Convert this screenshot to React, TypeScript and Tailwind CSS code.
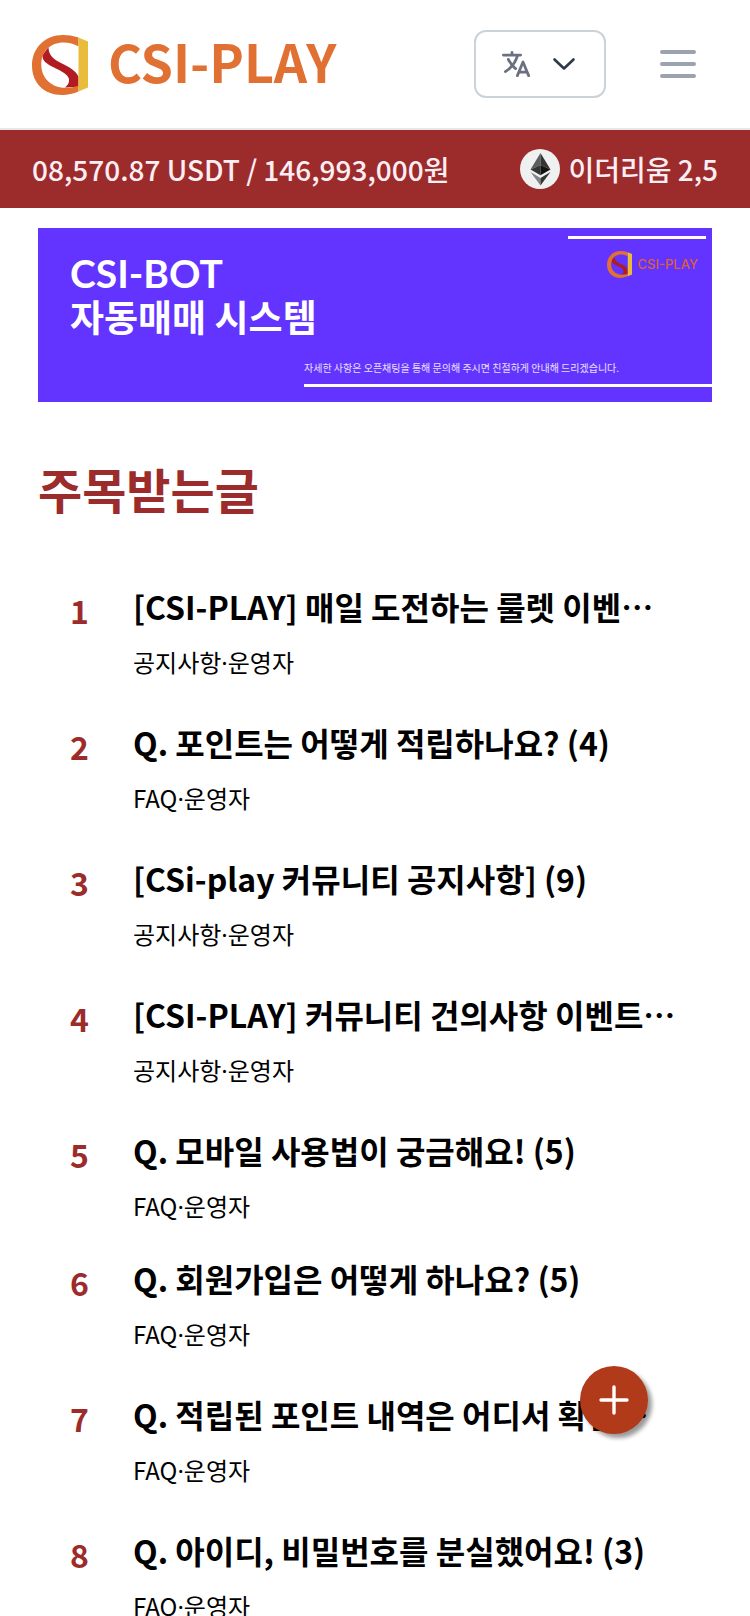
import React from 'react';
import { IoLanguage } from 'react-icons/io5';

type Post = { id: number; title: string; board: string; author: string };

const firstPosts: Post[] = [
  { id: 1, title: '[CSI-PLAY] 매일 도전하는 룰렛 이벤…', board: '공지사항', author: '운영자' },
  { id: 2, title: 'Q. 포인트는 어떻게 적립하나요? (4)', board: 'FAQ', author: '운영자' },
  { id: 3, title: '[CSi-play 커뮤니티 공지사항] (9)', board: '공지사항', author: '운영자' },
  { id: 4, title: '[CSI-PLAY] 커뮤니티 건의사항 이벤트…', board: '공지사항', author: '운영자' },
  { id: 5, title: 'Q. 모바일 사용법이 궁금해요! (5)', board: 'FAQ', author: '운영자' },
];

const morePosts: Post[] = [
  { id: 6, title: 'Q. 회원가입은 어떻게 하나요? (5)', board: 'FAQ', author: '운영자' },
  { id: 7, title: 'Q. 적립된 포인트 내역은 어디서 확인…', board: 'FAQ', author: '운영자' },
  { id: 8, title: 'Q. 아이디, 비밀번호를 분실했어요! (3)', board: 'FAQ', author: '운영자' },
];

function Emblem({ className }: { className: string }) {
  return (
    <svg viewBox="0 0 56 60" className={className} aria-hidden="true">
      <path
        d="M10.5 20C10 26 15 29 22 32.500C30 36.500 36 39.500 37 44C37.500 47.500 36 50 33 52.500L46.500 52V42C44.500 36 37 32 29 28C21 24 16.500 20 16.500 12Z"
        fill="#b01c21"
      />
      <path
        d="M46.500 2.500C41 .8 36 0 31 0C13 0 0 13 0 30.500C0 48 12 60 30 60C36 60 41.500 58.500 46.500 56.500V50.500C42 52.500 38 53 33 52.800C19 52.500 9.300 43 9.300 29.500C9.300 16.500 18.500 7.600 31.500 7.600C37 7.600 42 9 46.500 11.500Z"
        fill="#e17033"
      />
      <path d="M46.500 2.500L56 6.500V52.500L46.500 56.500Z" fill="#eabc3b" />
    </svg>
  );
}

function Ethereum() {
  return (
    <svg viewBox="0 0 40 40" className="size-10 shrink-0" aria-hidden="true">
      <circle cx="20" cy="20" r="20" fill="#eff0f0" />
      <path d="M20.500 4L10.500 20.500L20.500 16Z" fill="#5c5d5e" />
      <path d="M20.500 4L30.500 20.500L20.500 16Z" fill="#343434" />
      <path d="M10.500 20.500L20.500 16V26.300Z" fill="#343434" />
      <path d="M30.500 20.500L20.500 16V26.300Z" fill="#111313" />
      <path d="M10.500 23L20.500 29V36.500Z" fill="#828384" />
      <path d="M30.500 23L20.500 29V36.500Z" fill="#343434" />
    </svg>
  );
}

function PostList({ posts, start }: { posts: Post[]; start: number }) {
  return (
    <ol start={start} className="flex flex-col gap-10">
      {posts.map((post) => (
        <li key={post.id} className="flex">
          <span className="w-[63px] shrink-0 pt-1 text-[32px] leading-[48px] font-bold text-[#9c2c2b]">
            {post.id}
          </span>
          <div className="min-w-0 flex-1">
            <a href={`#post-${post.id}`} className="block truncate text-[32px] leading-[48px] font-bold">
              {post.title}
            </a>
            <p className="mt-4 text-2xl leading-8">
              {post.board}
              <span className="font-['Noto_Sans',sans-serif] leading-none">·</span>
              {post.author}
            </p>
          </div>
        </li>
      ))}
    </ol>
  );
}

export default function App() {
  return (
    <div className="min-h-screen bg-white font-['Noto_Sans_CJK_KR','Noto_Sans',sans-serif] text-black">
      <header className="flex items-center justify-between border-b-2 border-gray-200 px-8 py-[30px]">
        <a href="#home" className="flex items-center gap-5 text-[#e17033]">
          <Emblem className="mt-0.5 h-[60px] w-14" />
          <span className="pb-1.5 text-[52px] leading-[60px] font-bold whitespace-nowrap">CSI-PLAY</span>
        </a>
        <div className="flex items-center gap-8">
          <button
            type="button"
            aria-label="언어 선택"
            className="flex h-[68px] w-[132px] items-center justify-center gap-5 rounded-xl border-2 border-[#cbd2da] bg-white pr-1"
          >
            <IoLanguage className="size-8 text-[#6b7080]" />
            <svg viewBox="0 0 24 14" className="h-3.5 w-6" fill="none" aria-hidden="true">
              <path d="M2.500 2.500L12 11.500L21.500 2.500" stroke="#2c3947" strokeWidth="2.600" strokeLinecap="round" strokeLinejoin="round" />
            </svg>
          </button>
          <button type="button" aria-label="메뉴" className="px-4">
            <svg viewBox="0 0 24 24" className="size-12" fill="none" aria-hidden="true">
              <path d="M4 6h16M4 12h16M4 18h16" stroke="#9ca3af" strokeWidth="2" strokeLinecap="round" />
            </svg>
          </button>
        </div>
      </header>

      <section className="bg-[#9c2c2b] px-8 py-[19px] text-[28px] leading-10 font-medium text-[#fdeef4]">
        <div className="flex items-center overflow-hidden whitespace-nowrap">
          <span className="shrink-0">08,570.87 USDT / 146,993,000원</span>
          <span className="ml-[71px] flex shrink-0 items-center gap-2">
            <Ethereum />
            <span>이더리움 2,5</span>
          </span>
        </div>
      </section>

      <main className="px-[38px] pt-5 pb-10">
        <a href="#csi-bot" className="relative flex flex-col bg-[#6333ff] pt-6 pb-[15px] text-white">
          <p className="pl-8 font-['Lato','Noto_Sans_CJK_KR',sans-serif] text-[39px] leading-[43px] font-bold">
            CSI-BOT
          </p>
          <p className="pl-8 text-[37px] leading-[43px] font-bold">자동매매 시스템</p>
          <div className="absolute top-2 right-1.5 w-[138px] border-t-[3px] border-white pt-[11px]">
            <span className="flex items-center justify-end gap-1.5 pr-2 text-[#d9603a]">
              <Emblem className="h-[27px] w-[25px]" />
              <span className="font-['Inter',sans-serif] text-[13px] leading-7 font-medium">CSI-PLAY</span>
            </span>
          </div>
          <p className="mt-[22px] ml-[266px] border-b-[3px] border-white pb-2 text-[10px] leading-4 text-white/85">
            자세한 사항은 오픈채팅을 통해 문의해 주시면 친절하게 안내해 드리겠습니다.
          </p>
        </a>

        <h2 className="mt-[52px] text-[48px] leading-[68px] font-bold text-[#9c2c2b]">주목받는글</h2>

        <div className="mt-[60px] flex flex-col gap-8 px-8">
          <PostList posts={firstPosts} start={1} />
          <PostList posts={morePosts} start={6} />
        </div>
      </main>

      <button
        type="button"
        aria-label="글쓰기"
        className="fixed right-[102px] bottom-[182px] flex size-[68px] items-center justify-center rounded-full bg-[#b13a1a] shadow-[4px_4px_4px_rgba(0,0,0,0.4)]"
      >
        <svg viewBox="0 0 30 30" className="size-[30px]" fill="none" aria-hidden="true">
          <path d="M15 2V28M2 15H28" stroke="#fff" strokeWidth="3.400" strokeLinecap="round" />
        </svg>
      </button>
    </div>
  );
}
